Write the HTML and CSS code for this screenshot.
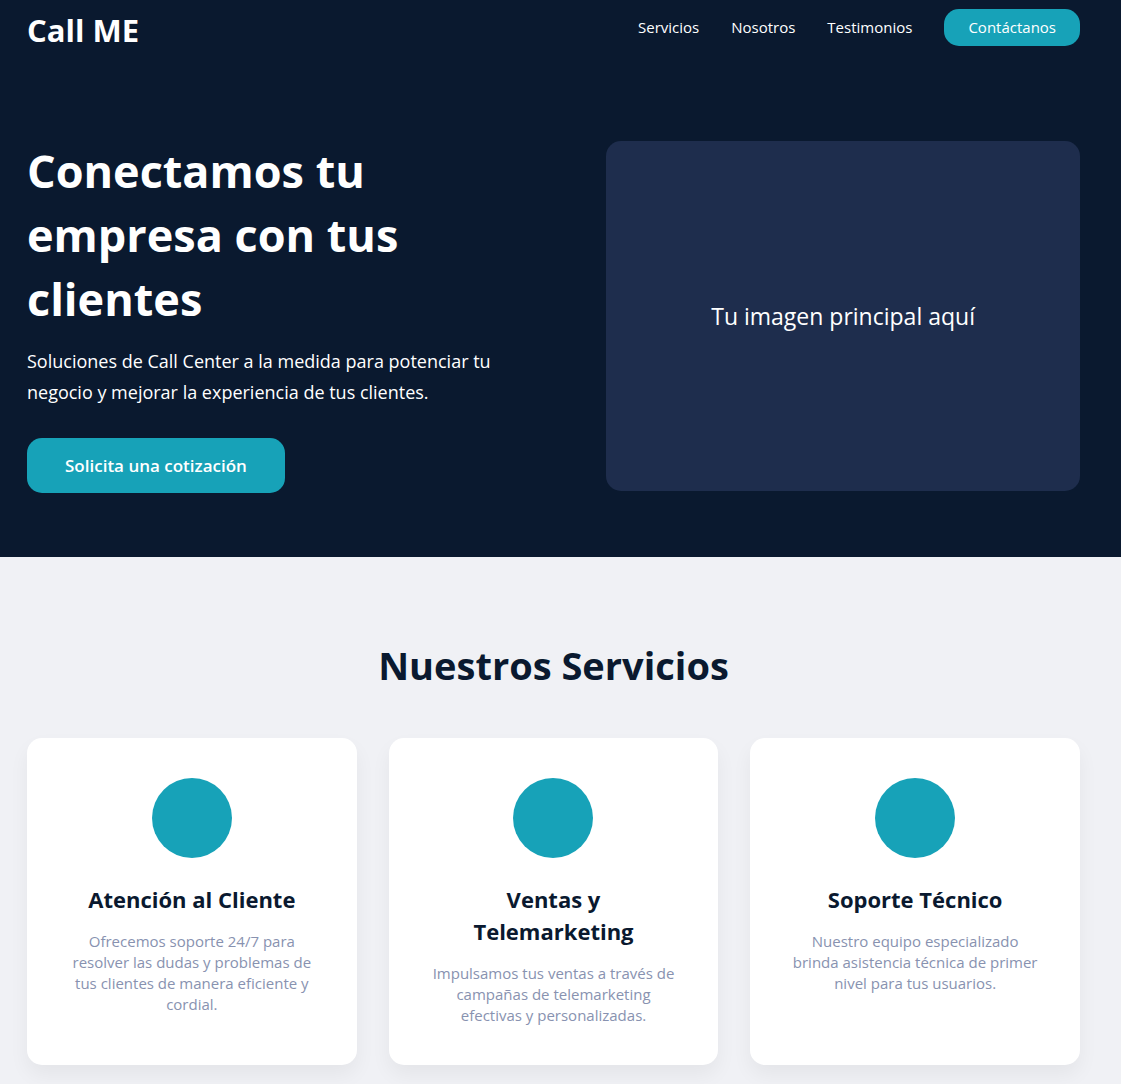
FILE: index.html
```html
<!DOCTYPE html>
<html lang="es">
<head>
  <meta charset="utf-8">
  <meta name="viewport" content="width=device-width, initial-scale=1">
  <title>Call ME</title>
  <link rel="stylesheet" href="styles.css">
</head>
<body>
  <div class="top">
    <header class="header">
      <a class="logo" href="#">Call ME</a>
      <nav class="nav">
        <a class="nav-link" href="#servicios">Servicios</a>
        <a class="nav-link" href="#nosotros">Nosotros</a>
        <a class="nav-link" href="#testimonios">Testimonios</a>
        <a class="nav-link nav-button" href="#contacto">Contáctanos</a>
      </nav>
    </header>
    <section class="hero">
      <div class="hero-text">
        <h1 class="hero-title">Conectamos tu empresa con tus clientes</h1>
        <p class="hero-copy">Soluciones de Call Center a la medida para potenciar tu negocio y mejorar la experiencia de tus clientes.</p>
        <button class="hero-button" type="button">Solicita una cotización</button>
      </div>
      <div class="hero-image">Tu imagen principal aquí</div>
    </section>
  </div>
  <main class="services" id="servicios">
    <h2 class="services-title">Nuestros Servicios</h2>
    <div class="cards">
      <article class="card">
        <div class="card-icon"></div>
        <h3 class="card-title">Atención al Cliente</h3>
        <p class="card-copy">Ofrecemos soporte 24/7 para resolver las dudas y problemas de tus clientes de manera eficiente y cordial.</p>
      </article>
      <article class="card">
        <div class="card-icon"></div>
        <h3 class="card-title">Ventas y Telemarketing</h3>
        <p class="card-copy">Impulsamos tus ventas a través de campañas de telemarketing efectivas y personalizadas.</p>
      </article>
      <article class="card">
        <div class="card-icon"></div>
        <h3 class="card-title">Soporte Técnico</h3>
        <p class="card-copy">Nuestro equipo especializado brinda asistencia técnica de primer nivel para tus usuarios.</p>
      </article>
    </div>
  </main>
</body>
</html>
```

FILE: styles.css
```css
* {
  box-sizing: border-box;
  margin: 0;
  padding: 0;
}

body {
  background: #f0f1f5;
  color: #0a192f;
  font-family: "Open Sans", "Noto Sans", sans-serif;
  font-size: 15px;
}

.top {
  padding: 0 41px 64px 27px;
  background: #0a192f;
  color: #fff;
}

.header {
  display: flex;
  align-items: center;
  justify-content: space-between;
  height: 55px;
}

.logo {
  padding-top: 4px;
  color: #fff;
  font-size: 31px;
  font-weight: 700;
  line-height: 40px;
  text-decoration: none;
}

.nav {
  display: flex;
  align-items: center;
  gap: 32px;
}

.nav-link {
  color: #fff;
  line-height: 21px;
  text-decoration: none;
}

.nav-button {
  padding: 8px 24px;
  border-radius: 15px;
  background: #17a2b8;
}

.hero {
  display: flex;
  align-items: center;
  justify-content: space-between;
  padding-top: 84px;
}

.hero-text {
  width: 45%;
}

.hero-title {
  margin-bottom: 15px;
  font-size: 45px;
  font-weight: 700;
  line-height: 64px;
}

.hero-copy {
  margin-bottom: 30px;
  font-size: 18px;
  line-height: 31px;
}

.hero-button {
  padding: 16px 38px;
  border: 0;
  border-radius: 15px;
  background: #17a2b8;
  color: #fff;
  font-family: inherit;
  font-size: 17px;
  font-weight: 600;
  line-height: 23px;
  cursor: pointer;
}

.hero-image {
  display: flex;
  align-items: center;
  justify-content: center;
  width: 45%;
  height: 350px;
  border-radius: 15px;
  background: #1e2d4d;
  font-size: 23px;
}

.services {
  padding: 80px 41px 19px 27px;
}

.services-title {
  margin-bottom: 45px;
  font-size: 38px;
  font-weight: 700;
  line-height: 56px;
  text-align: center;
}

.cards {
  display: grid;
  grid-template-columns: repeat(3, 1fr);
  gap: 32px;
}

.card {
  padding: 40px 40px 39px;
  border-radius: 15px;
  background: #fff;
  box-shadow: 0 10px 20px rgba(0, 0, 0, 0.05);
  text-align: center;
}

.card-icon {
  width: 80px;
  height: 80px;
  margin: 0 auto 25px;
  border-radius: 50%;
  background: #17a2b8;
}

.card-title {
  margin-bottom: 16px;
  font-size: 22px;
  font-weight: 700;
  line-height: 32px;
}

.card-copy {
  color: #8892b0;
  line-height: 21px;
}
```
